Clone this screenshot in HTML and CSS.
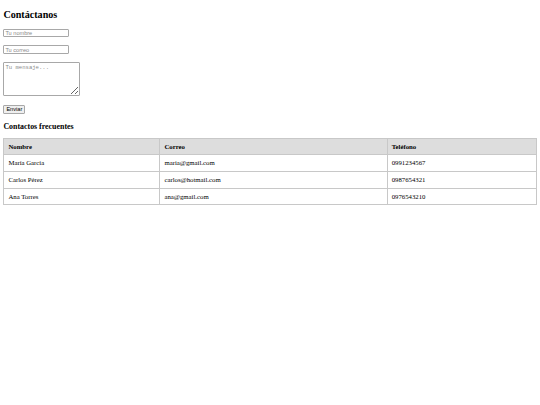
FILE: index.html
```html
<!DOCTYPE html>
<html lang="es">
<head>
<meta charset="utf-8">
<title>Contáctanos</title>
<link rel="stylesheet" href="styles.css">
</head>
<body>
<h2 class="title">Contáctanos</h2>
<form class="contact-form">
<input class="field" type="text" placeholder="Tu nombre">
<input class="field" type="email" placeholder="Tu correo">
<textarea class="message" placeholder="Tu mensaje..."></textarea>
<button class="send" type="submit">Enviar</button>
</form>
<h3 class="subtitle">Contactos frecuentes</h3>
<table class="contacts">
<thead>
<tr><th>Nombre</th><th>Correo</th><th>Teléfono</th></tr>
</thead>
<tbody>
<tr><td>María García</td><td>maria@gmail.com</td><td>0991234567</td></tr>
<tr><td>Carlos Pérez</td><td>carlos@hotmail.com</td><td>0987654321</td></tr>
<tr><td>Ana Torres</td><td>ana@gmail.com</td><td>0976543210</td></tr>
</tbody>
</table>
</body>
</html>
```
FILE: styles.css
```css
html, body {
  margin: 0;
  padding: 0;
  background: #fff;
}
body {
  padding: 0 3.4px;
  font-family: "Liberation Serif", "Times New Roman", serif;
  font-size: 6.75px;
  color: #000;
}
.title {
  margin: 0;
  padding-top: 8.5px;
  font-size: 10.1px;
  line-height: 12px;
  font-weight: bold;
}
.contact-form {
  display: flex;
  flex-direction: column;
  align-items: flex-start;
  margin-top: 8px;
}
.field,
.message,
.send {
  box-sizing: border-box;
  margin: 0;
  font-size: 5.6px;
  color: #000;
}
.field {
  width: 66px;
  height: 8.6px;
  padding: 0 1px;
  border: 0.6px solid #a8a8a8;
  border-radius: 1px;
  font-family: "Liberation Sans", Arial, sans-serif;
  margin-bottom: 8.2px;
}
.field::placeholder {
  color: #8a8a8a;
}
.message {
  width: 77px;
  height: 34px;
  padding: 1px;
  border: 0.6px solid #a8a8a8;
  border-radius: 1px;
  font-family: "Liberation Mono", "Courier New", monospace;
  resize: both;
  margin-top: -0.2px;
  margin-bottom: 9px;
}
.message::placeholder {
  color: #8a8a8a;
}
.send {
  height: 9px;
  padding: 0 2px;
  border: 0.6px solid #a8a8a8;
  border-radius: 1px;
  background: #efefef;
  font-family: "Liberation Sans", Arial, sans-serif;
  line-height: 7px;
}
.subtitle {
  margin: 8.5px 0 6px;
  font-size: 7.9px;
  line-height: 9.5px;
  font-weight: bold;
}
.contacts {
  width: 100%;
  border-collapse: collapse;
  font-size: 6.75px;
}
.contacts th,
.contacts td {
  border: 0.8px solid #c8c8c8;
  padding: 4px;
  line-height: 7.6px;
  text-align: left;
}
.contacts th {
  background: #ddd;
  font-weight: bold;
}
```
